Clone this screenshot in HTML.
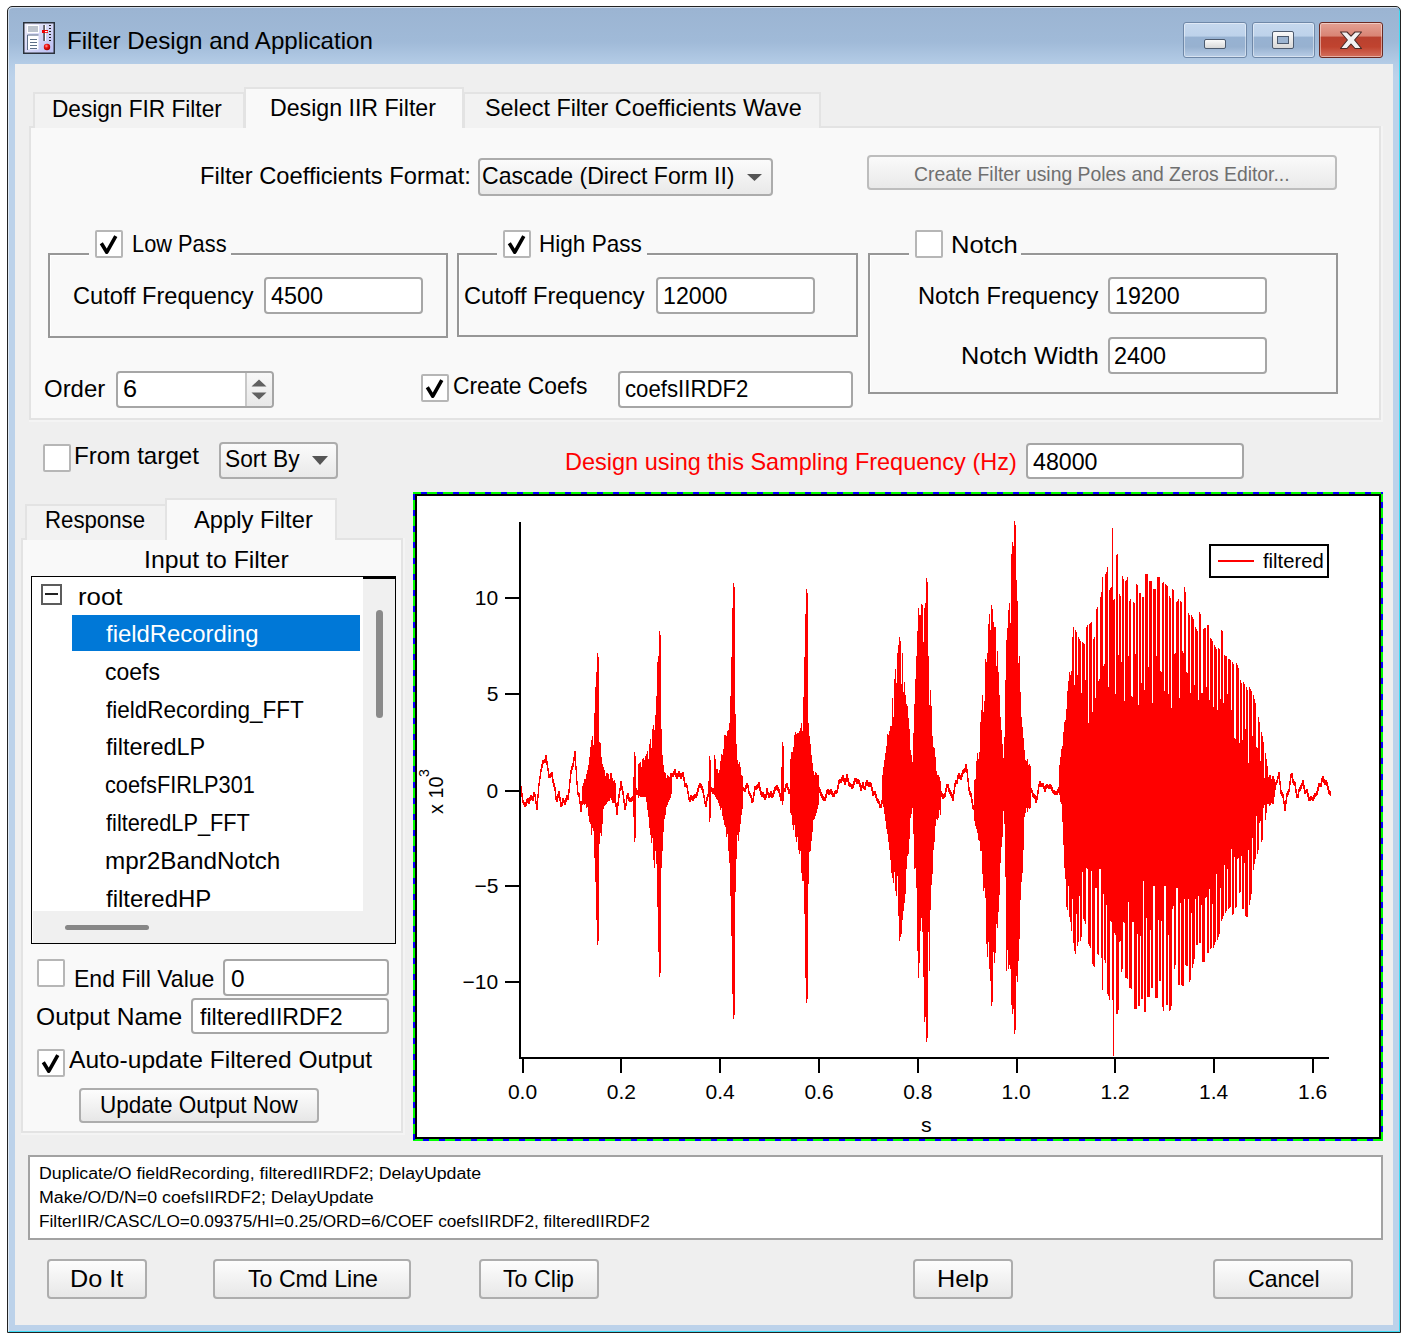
<!DOCTYPE html><html><head><meta charset="utf-8"><style>
html,body{margin:0;padding:0;background:#fff;width:1402px;height:1334px;overflow:hidden;position:relative;font-family:"Liberation Sans",sans-serif}
.t{position:absolute;white-space:nowrap;line-height:1;transform-origin:0 0}
</style></head><body>
<div style="position:absolute;left:7px;top:6px;width:1394px;height:1327px;box-sizing:border-box;border:1px solid #222;border-radius:5px 5px 0 0;background:linear-gradient(#9bb4d2 0px,#a0bad8 35px,#b5cde7 58px,#bcd2ea 70px,#bcd2ea 100%);box-shadow:inset 1px 1px 0 rgba(255,255,255,.55), inset -1px -1px 0 #3fdcf5"></div>
<div style="position:absolute;left:15px;top:64px;width:1378px;height:1261px;box-sizing:border-box;background:#efefef"></div>
<svg style="position:absolute;left:23px;top:22px" width="32" height="32" viewBox="0 0 32 32">
<defs><linearGradient id="ig" x1="0" y1="0" x2="1" y2="1"><stop offset="0" stop-color="#f0f0fb"/><stop offset="1" stop-color="#b9bdf3"/></linearGradient>
<radialGradient id="rb" cx="0.4" cy="0.35" r="0.6"><stop offset="0" stop-color="#ff9a9a"/><stop offset="0.5" stop-color="#ee1111"/><stop offset="1" stop-color="#b00000"/></radialGradient></defs>
<rect x="0.75" y="0.75" width="30.5" height="30.5" fill="url(#ig)" stroke="#2b323c" stroke-width="1.5"/>
<rect x="4.5" y="3.5" width="11" height="7" fill="#bcc3cd" stroke="#fff" stroke-width="1"/>
<rect x="4.5" y="13.5" width="11" height="14" fill="#fff"/>
<path d="M4.5 13 V28 M4.5 13 H15.5" stroke="#5d6f88" stroke-width="1"/>
<path d="M7 17.5H14M7 20.5H14M7 23.5H14M7 26.5H14" stroke="#5d6f88" stroke-width="1"/>
<rect x="20.5" y="3" width="1.3" height="16" fill="#111"/><rect x="21.8" y="3" width="1.2" height="16" fill="#fff"/>
<rect x="19" y="8" width="6" height="3" fill="#e00"/><rect x="22" y="9" width="2.5" height="1.2" fill="#fff"/>
<path d="M26 3.5h2M26 6.5h2M26 9.5h2M26 12.5h2M26 15.5h2M26 18.5h2" stroke="#222" stroke-width="1"/>
<circle cx="24" cy="25" r="3.2" fill="url(#rb)"/>
</svg>
<span class="t" style="left:66.69px;top:28.98px;font-size:24px;color:#000;transform:scaleX(1.0057);">Filter Design and Application</span>
<div style="position:absolute;left:1183px;top:22px;width:64px;height:36px;box-sizing:border-box;border:1px solid #6f88a8;border-radius:3px;background:linear-gradient(#c6d8ee 0%,#bdd2ea 38%,#97b2d2 42%,#97b1d0 70%,#b8cde6 100%);box-shadow:inset 0 0 0 1px rgba(255,255,255,.45)"></div>
<div style="position:absolute;left:1204px;top:39px;width:22px;height:10px;box-sizing:border-box;border:1px solid #4c5a6e;border-radius:2px;background:linear-gradient(#fafafa,#d8d8d8)"></div>
<div style="position:absolute;left:1252px;top:22px;width:63px;height:36px;box-sizing:border-box;border:1px solid #6f88a8;border-radius:3px;background:linear-gradient(#c6d8ee 0%,#bdd2ea 38%,#97b2d2 42%,#97b1d0 70%,#b8cde6 100%);box-shadow:inset 0 0 0 1px rgba(255,255,255,.45)"></div>
<div style="position:absolute;left:1272px;top:31px;width:22px;height:18px;box-sizing:border-box;border:1px solid #4c5a6e;border-radius:2px;background:linear-gradient(#fafafa,#d8d8d8)"></div><div style="position:absolute;left:1277px;top:36px;width:12px;height:8px;box-sizing:border-box;border:1px solid #4c5a6e;background:#9cb4d1"></div>
<div style="position:absolute;left:1319px;top:22px;width:64px;height:36px;box-sizing:border-box;border:1px solid #6b2a22;border-radius:3px;background:linear-gradient(#e3a194 0%,#d98474 38%,#b9412f 42%,#c0432f 70%,#d36f5c 100%);box-shadow:inset 0 0 0 1px rgba(255,255,255,.45)"></div>
<svg style="position:absolute;left:1338px;top:29px" width="26" height="22" viewBox="0 0 26 22"><path d="M2.5 3 L9 3 L13 7.2 L17 3 L23.5 3 L16.6 11 L23.5 19.5 L17 19.5 L13 15 L9 19.5 L2.5 19.5 L9.4 11 Z" fill="#f2f2f2" stroke="#4a2b28" stroke-width="1.1" stroke-linejoin="round"/></svg>
<div style="position:absolute;left:29px;top:126px;width:1352px;height:294px;box-sizing:border-box;background:#f9f9f9;border:2px solid #e3e3e3;box-shadow:1px 1px 0 1px #f4f4f4"></div>
<div style="position:absolute;left:33px;top:92px;width:212px;height:36px;box-sizing:border-box;background:#f2f2f2;border:2px solid #e3e3e3;border-bottom:none"></div>
<div style="position:absolute;left:463px;top:92px;width:358px;height:36px;box-sizing:border-box;background:#f2f2f2;border:2px solid #e3e3e3;border-bottom:none"></div>
<div style="position:absolute;left:244px;top:87px;width:220px;height:41px;box-sizing:border-box;background:#f9f9f9;border:2px solid #e3e3e3;border-bottom:none"></div>
<span class="t" style="left:52.41px;top:96.58px;font-size:24px;color:#000;transform:scaleX(0.9429);">Design FIR Filter</span>
<span class="t" style="left:270.17px;top:96.18px;font-size:24px;color:#000;transform:scaleX(0.9644);">Design IIR Filter</span>
<span class="t" style="left:484.93px;top:96.18px;font-size:24px;color:#000;transform:scaleX(0.9732);">Select Filter Coefficients Wave</span>
<span class="t" style="left:200.42px;top:164.28px;font-size:24px;color:#000;transform:scaleX(0.9876);">Filter Coefficients Format:</span>
<div style="position:absolute;left:478px;top:158px;width:295px;height:38px;box-sizing:border-box;border:2px solid #acacac;border-radius:4px;background:linear-gradient(#fbfbfb,#e9e9e9)"></div>
<svg style="position:absolute;left:747px;top:174px" width="15" height="7"><path d="M0 0 H15 L7.5 7 Z" fill="#555"/></svg>
<span class="t" style="left:482.20px;top:164.08px;font-size:24px;color:#000;transform:scaleX(0.9612);">Cascade (Direct Form II)</span>
<div style="position:absolute;left:867px;top:155px;width:470px;height:35px;box-sizing:border-box;border:2px solid #bdbdbd;border-radius:4px;background:linear-gradient(#fafafa,#e9e9e9)"></div>
<span class="t" style="left:914.08px;top:163.22px;font-size:21px;color:#6f6f6f;transform:scaleX(0.9221);">Create Filter using Poles and Zeros Editor...</span>
<div style="position:absolute;left:48px;top:253px;width:400px;height:85px;box-sizing:border-box;border:2px solid #979797;box-shadow:inset 1px 1px 0 #fff"></div>
<div style="position:absolute;left:89px;top:252px;width:142px;height:4px;box-sizing:border-box;background:#f9f9f9"></div>
<div style="position:absolute;left:95px;top:230px;width:28px;height:28px;box-sizing:border-box;border:2px solid #b6b6b6;border-radius:2px;background:#fff"></div>
<svg style="position:absolute;left:95px;top:230px" width="28" height="28"><path d="M6.3 13.2 L11.8 22.2 L20.8 6.2" fill="none" stroke="#000" stroke-width="3.6" stroke-linejoin="round"/></svg>
<span class="t" style="left:131.58px;top:231.88px;font-size:24px;color:#000;transform:scaleX(0.9086);">Low Pass</span>
<span class="t" style="left:72.67px;top:283.98px;font-size:24px;color:#000;transform:scaleX(0.9830);">Cutoff Frequency</span>
<div style="position:absolute;left:264px;top:277px;width:159px;height:37px;box-sizing:border-box;border:2px solid #a6a6a6;border-radius:4px;background:#fff"></div>
<span class="t" style="left:270.51px;top:284.28px;font-size:24px;color:#000;transform:scaleX(0.9769);">4500</span>
<div style="position:absolute;left:457px;top:253px;width:401px;height:84px;box-sizing:border-box;border:2px solid #979797;box-shadow:inset 1px 1px 0 #fff"></div>
<div style="position:absolute;left:497px;top:252px;width:150px;height:4px;box-sizing:border-box;background:#f9f9f9"></div>
<div style="position:absolute;left:503px;top:230px;width:28px;height:28px;box-sizing:border-box;border:2px solid #b6b6b6;border-radius:2px;background:#fff"></div>
<svg style="position:absolute;left:503px;top:230px" width="28" height="28"><path d="M6.3 13.2 L11.8 22.2 L20.8 6.2" fill="none" stroke="#000" stroke-width="3.6" stroke-linejoin="round"/></svg>
<span class="t" style="left:539.32px;top:231.88px;font-size:24px;color:#000;transform:scaleX(0.9396);">High Pass</span>
<span class="t" style="left:464.27px;top:283.98px;font-size:24px;color:#000;transform:scaleX(0.9830);">Cutoff Frequency</span>
<div style="position:absolute;left:656px;top:277px;width:159px;height:37px;box-sizing:border-box;border:2px solid #a6a6a6;border-radius:4px;background:#fff"></div>
<span class="t" style="left:663.11px;top:284.28px;font-size:24px;color:#000;transform:scaleX(0.9650);">12000</span>
<div style="position:absolute;left:868px;top:253px;width:470px;height:141px;box-sizing:border-box;border:2px solid #979797;box-shadow:inset 1px 1px 0 #fff"></div>
<div style="position:absolute;left:909px;top:252px;width:112px;height:4px;box-sizing:border-box;background:#f9f9f9"></div>
<div style="position:absolute;left:915px;top:230px;width:28px;height:28px;box-sizing:border-box;border:2px solid #b6b6b6;border-radius:2px;background:#fff"></div>
<span class="t" style="left:950.97px;top:232.68px;font-size:24px;color:#000;transform:scaleX(1.0661);">Notch</span>
<span class="t" style="left:917.73px;top:283.98px;font-size:24px;color:#000;transform:scaleX(0.9864);">Notch Frequency</span>
<div style="position:absolute;left:1108px;top:277px;width:159px;height:37px;box-sizing:border-box;border:2px solid #a6a6a6;border-radius:4px;background:#fff"></div>
<span class="t" style="left:1114.81px;top:283.98px;font-size:24px;color:#000;transform:scaleX(0.9681);">19200</span>
<span class="t" style="left:961.29px;top:344.08px;font-size:24px;color:#000;transform:scaleX(1.0535);">Notch Width</span>
<div style="position:absolute;left:1108px;top:337px;width:159px;height:37px;box-sizing:border-box;border:2px solid #a6a6a6;border-radius:4px;background:#fff"></div>
<span class="t" style="left:1114.48px;top:344.08px;font-size:24px;color:#000;transform:scaleX(0.9756);">2400</span>
<span class="t" style="left:44.30px;top:377.48px;font-size:24px;color:#000;transform:scaleX(0.9983);">Order</span>
<div style="position:absolute;left:116px;top:371px;width:158px;height:37px;box-sizing:border-box;border:2px solid #a6a6a6;border-radius:4px;background:#fff"></div>
<div style="position:absolute;left:245px;top:373px;width:27px;height:33px;box-sizing:border-box;border-left:2px solid #c8c8c8;background:linear-gradient(#f7f7f7,#e8e8e8);border-radius:0 3px 3px 0"></div>
<svg style="position:absolute;left:250px;top:378px" width="18" height="24"><path d="M1.5 8.5 H16.5 L9 1.5 Z M1.5 14.5 H16.5 L9 21.5 Z" fill="#606060"/></svg>
<span class="t" style="left:122.88px;top:377.48px;font-size:24px;color:#000;transform:scaleX(1.0545);">6</span>
<div style="position:absolute;left:421px;top:374px;width:28px;height:28px;box-sizing:border-box;border:2px solid #b6b6b6;border-radius:2px;background:#fff"></div>
<svg style="position:absolute;left:421px;top:374px" width="28" height="28"><path d="M6.3 13.2 L11.8 22.2 L20.8 6.2" fill="none" stroke="#000" stroke-width="3.6" stroke-linejoin="round"/></svg>
<span class="t" style="left:452.61px;top:373.58px;font-size:24px;color:#000;transform:scaleX(0.9498);">Create Coefs</span>
<div style="position:absolute;left:618px;top:371px;width:235px;height:37px;box-sizing:border-box;border:2px solid #a6a6a6;border-radius:4px;background:#fff"></div>
<span class="t" style="left:625.27px;top:377.48px;font-size:24px;color:#000;transform:scaleX(0.9257);">coefsIIRDF2</span>
<div style="position:absolute;left:43px;top:444px;width:28px;height:28px;box-sizing:border-box;border:2px solid #b6b6b6;border-radius:2px;background:#fff"></div>
<span class="t" style="left:73.68px;top:443.78px;font-size:24px;color:#000;transform:scaleX(1.0078);">From target</span>
<div style="position:absolute;left:219px;top:442px;width:119px;height:37px;box-sizing:border-box;border:2px solid #acacac;border-radius:4px;background:linear-gradient(#fbfbfb,#e9e9e9)"></div>
<svg style="position:absolute;left:312px;top:456px" width="16" height="9"><path d="M0 0 H16 L8.0 9 Z" fill="#555"/></svg>
<span class="t" style="left:224.95px;top:447.48px;font-size:24px;color:#000;transform:scaleX(0.9466);">Sort By</span>
<span class="t" style="left:564.54px;top:450.18px;font-size:24px;color:#ff0000;transform:scaleX(0.9788);">Design using this Sampling Frequency (Hz)</span>
<div style="position:absolute;left:1026px;top:443px;width:218px;height:36px;box-sizing:border-box;border:2px solid #a6a6a6;border-radius:4px;background:#fff"></div>
<span class="t" style="left:1033.02px;top:449.98px;font-size:24px;color:#000;transform:scaleX(0.9664);">48000</span>
<div style="position:absolute;left:21px;top:538px;width:382px;height:595px;box-sizing:border-box;background:#f9f9f9;border:2px solid #e3e3e3;box-shadow:1px 1px 0 1px #f4f4f4"></div>
<div style="position:absolute;left:25px;top:504px;width:142px;height:36px;box-sizing:border-box;background:#f2f2f2;border:2px solid #e3e3e3;border-bottom:none"></div>
<div style="position:absolute;left:165px;top:498px;width:172px;height:42px;box-sizing:border-box;background:#f9f9f9;border:2px solid #e3e3e3;border-bottom:none"></div>
<span class="t" style="left:45.05px;top:508.18px;font-size:24px;color:#000;transform:scaleX(0.9257);">Response</span>
<span class="t" style="left:193.50px;top:507.98px;font-size:24px;color:#000;transform:scaleX(0.9896);">Apply Filter</span>
<span class="t" style="left:143.57px;top:547.78px;font-size:24px;color:#000;transform:scaleX(1.0335);">Input to Filter</span>
<div style="position:absolute;left:31px;top:576px;width:365px;height:368px;box-sizing:border-box;background:#fff;border:1.5px solid #000"></div>
<div style="position:absolute;left:32.5px;top:911px;width:362.0px;height:31.5px;box-sizing:border-box;background:#f0f0f0"></div>
<div style="position:absolute;left:363px;top:577.5px;width:31.5px;height:333.5px;box-sizing:border-box;background:#f0f0f0"></div>
<div style="position:absolute;left:363px;top:576px;width:33px;height:2.6000000000000227px;box-sizing:border-box;background:#000"></div>
<div style="position:absolute;left:376px;top:610px;width:7px;height:108px;box-sizing:border-box;background:#8a8a8a;border-radius:3.5px"></div>
<div style="position:absolute;left:65px;top:925px;width:84px;height:5px;box-sizing:border-box;background:#878787;border-radius:2.5px"></div>
<div style="position:absolute;left:40.5px;top:583.5px;width:21.5px;height:21.5px;box-sizing:border-box;border:2px solid #5c5c5c"></div>
<div style="position:absolute;left:45px;top:593.4px;width:12.5px;height:1.8000000000000682px;box-sizing:border-box;background:#222"></div>
<span class="t" style="left:78.39px;top:584.58px;font-size:24px;color:#000;transform:scaleX(1.0742);">root</span>
<div style="position:absolute;left:72px;top:615px;width:288px;height:36px;box-sizing:border-box;background:#0078d7"></div>
<span class="t" style="left:106.05px;top:622.08px;font-size:24px;color:#fff;transform:scaleX(0.9947);">fieldRecording</span>
<span class="t" style="left:105.34px;top:659.88px;font-size:24px;color:#000;transform:scaleX(0.9568);">coefs</span>
<span class="t" style="left:106.07px;top:697.68px;font-size:24px;color:#000;transform:scaleX(0.9381);">fieldRecording_FFT</span>
<span class="t" style="left:106.06px;top:735.48px;font-size:24px;color:#000;transform:scaleX(0.9790);">filteredLP</span>
<span class="t" style="left:105.39px;top:773.28px;font-size:24px;color:#000;transform:scaleX(0.9060);">coefsFIRLP301</span>
<span class="t" style="left:106.07px;top:811.08px;font-size:24px;color:#000;transform:scaleX(0.9063);">filteredLP_FFT</span>
<span class="t" style="left:104.78px;top:848.88px;font-size:24px;color:#000;transform:scaleX(1.0109);">mpr2BandNotch</span>
<span class="t" style="left:106.05px;top:886.68px;font-size:24px;color:#000;transform:scaleX(0.9995);">filteredHP</span>
<div style="position:absolute;left:37px;top:959px;width:28px;height:28px;box-sizing:border-box;border:2px solid #b6b6b6;border-radius:2px;background:#fff"></div>
<span class="t" style="left:74.28px;top:966.68px;font-size:24px;color:#000;transform:scaleX(0.9599);">End Fill Value</span>
<div style="position:absolute;left:223px;top:959px;width:166px;height:37px;box-sizing:border-box;border:2px solid #a6a6a6;border-radius:4px;background:#fff"></div>
<span class="t" style="left:230.58px;top:966.68px;font-size:24px;color:#000;transform:scaleX(1.0174);">0</span>
<span class="t" style="left:36.48px;top:1004.78px;font-size:24px;color:#000;transform:scaleX(1.0245);">Output Name</span>
<div style="position:absolute;left:191px;top:998px;width:198px;height:36px;box-sizing:border-box;border:2px solid #a6a6a6;border-radius:4px;background:#fff"></div>
<span class="t" style="left:199.66px;top:1004.78px;font-size:24px;color:#000;transform:scaleX(0.9642);">filteredIIRDF2</span>
<div style="position:absolute;left:37px;top:1049px;width:28px;height:28px;box-sizing:border-box;border:2px solid #b6b6b6;border-radius:2px;background:#fff"></div>
<svg style="position:absolute;left:37px;top:1049px" width="28" height="28"><path d="M6.3 13.2 L11.8 22.2 L20.8 6.2" fill="none" stroke="#000" stroke-width="3.6" stroke-linejoin="round"/></svg>
<span class="t" style="left:69.30px;top:1048.48px;font-size:24px;color:#000;transform:scaleX(1.0236);">Auto-update Filtered Output</span>
<div style="position:absolute;left:79px;top:1088px;width:240px;height:35px;box-sizing:border-box;border:2px solid #adadad;border-radius:4px;background:linear-gradient(#fdfdfd,#e7e7e7)"></div>
<span class="t" style="left:100.06px;top:1092.88px;font-size:24px;color:#000;transform:scaleX(0.9381);">Update Output Now</span>
<div style="position:absolute;left:413px;top:492px;width:970px;height:649px;box-sizing:border-box;background:#00ff00"></div>
<svg style="position:absolute;left:413px;top:492px" width="970" height="649"><path d="M0 1H970" stroke="#0000ff" stroke-width="2" stroke-dasharray="6 10" stroke-dashoffset="-8"/><path d="M1 0V649" stroke="#0000ff" stroke-width="2" stroke-dasharray="6 10" stroke-dashoffset="-2"/><path d="M969 0V649" stroke="#0000ff" stroke-width="2" stroke-dasharray="6 10" stroke-dashoffset="-10"/><path d="M0 648H970" stroke="#0000ff" stroke-width="2" stroke-dasharray="6 10" stroke-dashoffset="-10"/></svg>
<div style="position:absolute;left:415px;top:494px;width:966px;height:645px;box-sizing:border-box;background:#fff;border:2px solid #000"></div>
<svg style="position:absolute;left:0;top:0" width="1402" height="1334" shape-rendering="crispEdges"><path d="M521 786h1V797h-1ZM522 793h1V803h-1ZM523 800h1V805h-1ZM524 802h1V807h-1ZM525 802h1V807h-1ZM526 799h1V806h-1ZM527 798h1V803h-1ZM528 798h1V804h-1ZM529 797h1V804h-1ZM530 795h1V801h-1ZM531 795h1V800h-1ZM532 796h1V801h-1ZM533 792h1V801h-1ZM534 792h1V797h-1ZM535 794h1V804h-1ZM536 801h1V810h-1ZM537 794h1V810h-1ZM538 783h1V798h-1ZM539 776h1V786h-1ZM540 769h1V779h-1ZM541 764h1V772h-1ZM542 760h1V768h-1ZM543 760h1V764h-1ZM544 759h1V763h-1ZM545 755h1V763h-1ZM546 755h1V765h-1ZM547 761h1V771h-1ZM548 768h1V778h-1ZM549 774h1V778h-1ZM550 773h1V778h-1ZM551 772h1V777h-1ZM552 772h1V783h-1ZM553 779h1V787h-1ZM554 783h1V791h-1ZM555 787h1V800h-1ZM556 796h1V802h-1ZM557 794h1V802h-1ZM558 791h1V798h-1ZM559 791h1V801h-1ZM560 797h1V807h-1ZM561 802h1V807h-1ZM562 798h1V806h-1ZM563 798h1V803h-1ZM564 800h1V805h-1ZM565 798h1V805h-1ZM566 795h1V802h-1ZM567 795h1V800h-1ZM568 789h1V800h-1ZM569 779h1V793h-1ZM570 770h1V783h-1ZM571 766h1V774h-1ZM572 763h1V770h-1ZM573 757h1V767h-1ZM574 751h1V761h-1ZM575 751h1V770h-1ZM576 766h1V785h-1ZM577 781h1V795h-1ZM578 792h1V797h-1ZM579 793h1V804h-1ZM580 801h1V812h-1ZM581 801h1V812h-1ZM582 786h1V805h-1ZM583 783h1V804h-1ZM584 779h1V805h-1ZM585 779h1V804h-1ZM586 774h1V808h-1ZM587 770h1V807h-1ZM588 765h1V816h-1ZM589 757h1V822h-1ZM590 747h1V824h-1ZM591 740h1V835h-1ZM592 736h1V828h-1ZM593 745h1V831h-1ZM594 713h1V858h-1ZM595 687h1V882h-1ZM596 672h1V920h-1ZM597 653h1V945h-1ZM598 657h1V941h-1ZM599 742h1V844h-1ZM600 743h1V833h-1ZM601 757h1V836h-1ZM602 764h1V824h-1ZM603 767h1V809h-1ZM604 770h1V806h-1ZM605 776h1V805h-1ZM606 773h1V804h-1ZM607 773h1V802h-1ZM608 774h1V801h-1ZM609 779h1V801h-1ZM610 773h1V798h-1ZM611 773h1V800h-1ZM612 778h1V803h-1ZM613 781h1V803h-1ZM614 780h1V803h-1ZM615 783h1V807h-1ZM616 803h1V815h-1ZM617 802h1V815h-1ZM618 794h1V806h-1ZM619 788h1V798h-1ZM620 781h1V791h-1ZM621 781h1V790h-1ZM622 786h1V795h-1ZM623 791h1V803h-1ZM624 799h1V810h-1ZM625 803h1V810h-1ZM626 795h1V806h-1ZM627 793h1V799h-1ZM628 793h1V801h-1ZM629 797h1V802h-1ZM630 798h1V802h-1ZM631 797h1V802h-1ZM632 796h1V801h-1ZM633 777h1V817h-1ZM634 752h1V842h-1ZM635 756h1V838h-1ZM636 788h1V795h-1ZM637 790h1V795h-1ZM638 764h1V798h-1ZM639 763h1V796h-1ZM640 762h1V797h-1ZM641 767h1V797h-1ZM642 759h1V797h-1ZM643 758h1V797h-1ZM644 760h1V797h-1ZM645 756h1V797h-1ZM646 754h1V802h-1ZM647 751h1V810h-1ZM648 759h1V817h-1ZM649 744h1V828h-1ZM650 739h1V835h-1ZM651 748h1V843h-1ZM652 729h1V838h-1ZM653 725h1V860h-1ZM654 730h1V868h-1ZM655 715h1V851h-1ZM656 696h1V864h-1ZM657 662h1V907h-1ZM658 656h1V952h-1ZM659 631h1V977h-1ZM660 635h1V973h-1ZM661 729h1V868h-1ZM662 755h1V851h-1ZM663 765h1V832h-1ZM664 772h1V819h-1ZM665 773h1V815h-1ZM666 778h1V807h-1ZM667 775h1V805h-1ZM668 776h1V802h-1ZM669 777h1V800h-1ZM670 773h1V798h-1ZM671 773h1V794h-1ZM672 773h1V777h-1ZM673 771h1V777h-1ZM674 769h1V775h-1ZM675 769h1V777h-1ZM676 773h1V779h-1ZM677 773h1V779h-1ZM678 771h1V777h-1ZM679 771h1V777h-1ZM680 773h1V779h-1ZM681 773h1V779h-1ZM682 772h1V777h-1ZM683 772h1V781h-1ZM684 777h1V787h-1ZM685 783h1V787h-1ZM686 783h1V788h-1ZM687 785h1V794h-1ZM688 791h1V800h-1ZM689 797h1V802h-1ZM690 795h1V802h-1ZM691 795h1V800h-1ZM692 796h1V801h-1ZM693 795h1V801h-1ZM694 794h1V799h-1ZM695 794h1V798h-1ZM696 792h1V798h-1ZM697 788h1V796h-1ZM698 785h1V792h-1ZM699 783h1V788h-1ZM700 783h1V788h-1ZM701 784h1V790h-1ZM702 786h1V793h-1ZM703 789h1V798h-1ZM704 795h1V804h-1ZM705 801h1V807h-1ZM706 797h1V807h-1ZM707 794h1V801h-1ZM708 781h1V797h-1ZM709 756h1V822h-1ZM710 760h1V818h-1ZM711 787h1V792h-1ZM712 788h1V794h-1ZM713 788h1V794h-1ZM714 755h1V795h-1ZM715 759h1V797h-1ZM716 769h1V799h-1ZM717 769h1V800h-1ZM718 773h1V803h-1ZM719 770h1V806h-1ZM720 761h1V810h-1ZM721 754h1V808h-1ZM722 755h1V816h-1ZM723 749h1V820h-1ZM724 735h1V825h-1ZM725 735h1V827h-1ZM726 736h1V837h-1ZM727 731h1V834h-1ZM728 730h1V851h-1ZM729 723h1V863h-1ZM730 696h1V896h-1ZM731 657h1V936h-1ZM732 608h1V994h-1ZM733 583h1V1019h-1ZM734 587h1V1015h-1ZM735 714h1V892h-1ZM736 744h1V859h-1ZM737 760h1V835h-1ZM738 764h1V841h-1ZM739 762h1V832h-1ZM740 767h1V824h-1ZM741 775h1V815h-1ZM742 776h1V809h-1ZM743 787h1V791h-1ZM744 788h1V792h-1ZM745 785h1V792h-1ZM746 783h1V789h-1ZM747 783h1V788h-1ZM748 785h1V794h-1ZM749 791h1V796h-1ZM750 793h1V798h-1ZM751 795h1V803h-1ZM752 798h1V803h-1ZM753 792h1V802h-1ZM754 786h1V796h-1ZM755 786h1V790h-1ZM756 785h1V790h-1ZM757 784h1V789h-1ZM758 782h1V788h-1ZM759 782h1V791h-1ZM760 787h1V795h-1ZM761 791h1V797h-1ZM762 792h1V797h-1ZM763 792h1V798h-1ZM764 794h1V800h-1ZM765 794h1V800h-1ZM766 788h1V798h-1ZM767 788h1V795h-1ZM768 792h1V798h-1ZM769 793h1V798h-1ZM770 791h1V797h-1ZM771 791h1V798h-1ZM772 793h1V798h-1ZM773 790h1V797h-1ZM774 787h1V794h-1ZM775 786h1V791h-1ZM776 785h1V790h-1ZM777 785h1V791h-1ZM778 787h1V793h-1ZM779 789h1V797h-1ZM780 793h1V801h-1ZM781 767h1V801h-1ZM782 742h1V805h-1ZM783 746h1V801h-1ZM784 788h1V792h-1ZM785 784h1V792h-1ZM786 783h1V788h-1ZM787 783h1V790h-1ZM788 787h1V794h-1ZM789 789h1V794h-1ZM790 759h1V813h-1ZM791 752h1V815h-1ZM792 752h1V825h-1ZM793 747h1V830h-1ZM794 735h1V825h-1ZM795 732h1V837h-1ZM796 734h1V842h-1ZM797 733h1V837h-1ZM798 733h1V850h-1ZM799 731h1V854h-1ZM800 728h1V851h-1ZM801 723h1V873h-1ZM802 731h1V881h-1ZM803 697h1V881h-1ZM804 657h1V914h-1ZM805 614h1V978h-1ZM806 589h1V1003h-1ZM807 593h1V999h-1ZM808 723h1V884h-1ZM809 736h1V852h-1ZM810 744h1V851h-1ZM811 755h1V841h-1ZM812 763h1V832h-1ZM813 771h1V820h-1ZM814 775h1V819h-1ZM815 772h1V816h-1ZM816 773h1V813h-1ZM817 775h1V809h-1ZM818 775h1V805h-1ZM819 787h1V793h-1ZM820 789h1V796h-1ZM821 792h1V798h-1ZM822 794h1V800h-1ZM823 796h1V801h-1ZM824 797h1V801h-1ZM825 794h1V801h-1ZM826 790h1V798h-1ZM827 789h1V794h-1ZM828 789h1V795h-1ZM829 790h1V795h-1ZM830 789h1V794h-1ZM831 789h1V795h-1ZM832 791h1V797h-1ZM833 793h1V797h-1ZM834 791h1V797h-1ZM835 790h1V794h-1ZM836 790h1V794h-1ZM837 785h1V793h-1ZM838 780h1V789h-1ZM839 779h1V784h-1ZM840 779h1V783h-1ZM841 777h1V783h-1ZM842 775h1V781h-1ZM843 775h1V782h-1ZM844 778h1V785h-1ZM845 778h1V785h-1ZM846 774h1V782h-1ZM847 774h1V782h-1ZM848 778h1V786h-1ZM849 782h1V787h-1ZM850 783h1V787h-1ZM851 784h1V789h-1ZM852 784h1V789h-1ZM853 781h1V788h-1ZM854 778h1V785h-1ZM855 778h1V782h-1ZM856 778h1V784h-1ZM857 779h1V784h-1ZM858 779h1V784h-1ZM859 780h1V787h-1ZM860 783h1V791h-1ZM861 785h1V791h-1ZM862 782h1V788h-1ZM863 782h1V789h-1ZM864 786h1V790h-1ZM865 782h1V790h-1ZM866 780h1V786h-1ZM867 780h1V786h-1ZM868 782h1V787h-1ZM869 782h1V787h-1ZM870 782h1V787h-1ZM871 783h1V791h-1ZM872 787h1V796h-1ZM873 791h1V796h-1ZM874 791h1V795h-1ZM875 791h1V798h-1ZM876 794h1V801h-1ZM877 798h1V803h-1ZM878 799h1V804h-1ZM879 801h1V808h-1ZM880 804h1V808h-1ZM881 800h1V808h-1ZM882 775h1V804h-1ZM883 767h1V807h-1ZM884 760h1V814h-1ZM885 753h1V821h-1ZM886 746h1V829h-1ZM887 734h1V834h-1ZM888 735h1V842h-1ZM889 731h1V850h-1ZM890 726h1V860h-1ZM891 726h1V873h-1ZM892 698h1V878h-1ZM893 717h1V883h-1ZM894 679h1V872h-1ZM895 669h1V891h-1ZM896 683h1V896h-1ZM897 653h1V876h-1ZM898 645h1V916h-1ZM899 637h1V941h-1ZM900 641h1V937h-1ZM901 684h1V934h-1ZM902 653h1V920h-1ZM903 692h1V911h-1ZM904 682h1V903h-1ZM905 695h1V894h-1ZM906 704h1V869h-1ZM907 706h1V856h-1ZM908 718h1V854h-1ZM909 729h1V839h-1ZM910 750h1V818h-1ZM911 755h1V814h-1ZM912 762h1V808h-1ZM913 733h1V834h-1ZM914 704h1V869h-1ZM915 679h1V868h-1ZM916 656h1V888h-1ZM917 631h1V951h-1ZM918 608h1V978h-1ZM919 615h1V963h-1ZM920 615h1V931h-1ZM921 604h1V918h-1ZM922 605h1V932h-1ZM923 642h1V977h-1ZM924 608h1V1022h-1ZM925 603h1V1017h-1ZM926 578h1V1042h-1ZM927 582h1V1038h-1ZM928 656h1V932h-1ZM929 705h1V971h-1ZM930 690h1V910h-1ZM931 706h1V885h-1ZM932 736h1V874h-1ZM933 747h1V850h-1ZM934 748h1V842h-1ZM935 757h1V826h-1ZM936 771h1V819h-1ZM937 775h1V820h-1ZM938 775h1V818h-1ZM939 777h1V810h-1ZM940 781h1V815h-1ZM941 791h1V797h-1ZM942 793h1V799h-1ZM943 794h1V799h-1ZM944 793h1V798h-1ZM945 788h1V797h-1ZM946 784h1V792h-1ZM947 784h1V788h-1ZM948 784h1V792h-1ZM949 788h1V794h-1ZM950 790h1V796h-1ZM951 792h1V798h-1ZM952 794h1V801h-1ZM953 790h1V801h-1ZM954 783h1V794h-1ZM955 780h1V787h-1ZM956 780h1V784h-1ZM957 775h1V784h-1ZM958 773h1V779h-1ZM959 773h1V779h-1ZM960 775h1V780h-1ZM961 773h1V780h-1ZM962 770h1V777h-1ZM963 769h1V774h-1ZM964 768h1V773h-1ZM965 764h1V772h-1ZM966 764h1V773h-1ZM967 769h1V782h-1ZM968 778h1V791h-1ZM969 787h1V795h-1ZM970 791h1V797h-1ZM971 793h1V803h-1ZM972 799h1V809h-1ZM973 805h1V810h-1ZM974 780h1V821h-1ZM975 779h1V826h-1ZM976 761h1V829h-1ZM977 753h1V833h-1ZM978 759h1V840h-1ZM979 752h1V841h-1ZM980 722h1V851h-1ZM981 710h1V851h-1ZM982 695h1V874h-1ZM983 712h1V891h-1ZM984 701h1V888h-1ZM985 659h1V898h-1ZM986 662h1V944h-1ZM987 653h1V957h-1ZM988 624h1V942h-1ZM989 614h1V969h-1ZM990 630h1V981h-1ZM991 605h1V1006h-1ZM992 609h1V1002h-1ZM993 622h1V952h-1ZM994 627h1V963h-1ZM995 627h1V953h-1ZM996 666h1V924h-1ZM997 651h1V928h-1ZM998 672h1V912h-1ZM999 695h1V895h-1ZM1000 717h1V863h-1ZM1001 730h1V847h-1ZM1002 744h1V837h-1ZM1003 758h1V811h-1ZM1004 737h1V824h-1ZM1005 680h1V877h-1ZM1006 640h1V971h-1ZM1007 628h1V950h-1ZM1008 610h1V969h-1ZM1009 603h1V965h-1ZM1010 623h1V969h-1ZM1011 554h1V1005h-1ZM1012 542h1V1014h-1ZM1013 546h1V1009h-1ZM1014 521h1V1034h-1ZM1015 525h1V1030h-1ZM1016 580h1V976h-1ZM1017 601h1V982h-1ZM1018 663h1V961h-1ZM1019 656h1V939h-1ZM1020 692h1V900h-1ZM1021 717h1V882h-1ZM1022 727h1V873h-1ZM1023 738h1V850h-1ZM1024 750h1V817h-1ZM1025 760h1V813h-1ZM1026 761h1V808h-1ZM1027 759h1V812h-1ZM1028 765h1V808h-1ZM1029 764h1V809h-1ZM1030 766h1V808h-1ZM1031 788h1V793h-1ZM1032 790h1V797h-1ZM1033 793h1V798h-1ZM1034 794h1V799h-1ZM1035 795h1V803h-1ZM1036 796h1V803h-1ZM1037 790h1V800h-1ZM1038 784h1V794h-1ZM1039 781h1V787h-1ZM1040 781h1V787h-1ZM1041 783h1V787h-1ZM1042 783h1V787h-1ZM1043 783h1V789h-1ZM1044 786h1V792h-1ZM1045 785h1V792h-1ZM1046 784h1V789h-1ZM1047 784h1V788h-1ZM1048 785h1V789h-1ZM1049 784h1V789h-1ZM1050 784h1V789h-1ZM1051 785h1V791h-1ZM1052 787h1V793h-1ZM1053 790h1V794h-1ZM1054 790h1V795h-1ZM1055 791h1V795h-1ZM1056 791h1V795h-1ZM1057 789h1V795h-1ZM1058 787h1V793h-1ZM1059 765h1V795h-1ZM1060 757h1V802h-1ZM1061 749h1V804h-1ZM1062 746h1V822h-1ZM1063 732h1V845h-1ZM1064 722h1V868h-1ZM1065 720h1V879h-1ZM1066 709h1V907h-1ZM1067 691h1V910h-1ZM1068 681h1V886h-1ZM1069 672h1V917h-1ZM1070 675h1V922h-1ZM1071 671h1V931h-1ZM1072 637h1V899h-1ZM1073 627h1V943h-1ZM1074 685h1V951h-1ZM1075 630h1V954h-1ZM1076 632h1V914h-1ZM1077 675h1V946h-1ZM1078 637h1V942h-1ZM1079 639h1V896h-1ZM1080 641h1V941h-1ZM1081 693h1V937h-1ZM1082 642h1V872h-1ZM1083 643h1V919h-1ZM1084 644h1V921h-1ZM1085 680h1V924h-1ZM1086 627h1V868h-1ZM1087 625h1V869h-1ZM1088 723h1V944h-1ZM1089 624h1V946h-1ZM1090 623h1V948h-1ZM1091 622h1V871h-1ZM1092 712h1V964h-1ZM1093 639h1V966h-1ZM1094 637h1V967h-1ZM1095 698h1V888h-1ZM1096 609h1V888h-1ZM1097 607h1V954h-1ZM1098 681h1V955h-1ZM1099 679h1V869h-1ZM1100 597h1V869h-1ZM1101 592h1V958h-1ZM1102 577h1V990h-1ZM1103 666h1V894h-1ZM1104 664h1V960h-1ZM1105 574h1V963h-1ZM1106 572h1V905h-1ZM1107 567h1V994h-1ZM1108 687h1V996h-1ZM1109 590h1V1000h-1ZM1110 588h1V921h-1ZM1111 587h1V922h-1ZM1112 528h1V1000h-1ZM1113 600h1V1056h-1ZM1114 599h1V933h-1ZM1115 694h1V935h-1ZM1116 555h1V1014h-1ZM1117 554h1V1014h-1ZM1118 655h1V1010h-1ZM1119 594h1V942h-1ZM1120 596h1V941h-1ZM1121 662h1V972h-1ZM1122 576h1V969h-1ZM1123 579h1V922h-1ZM1124 701h1V923h-1ZM1125 581h1V978h-1ZM1126 580h1V978h-1ZM1127 577h1V979h-1ZM1128 656h1V902h-1ZM1129 601h1V988h-1ZM1130 599h1V988h-1ZM1131 696h1V989h-1ZM1132 697h1V922h-1ZM1133 602h1V922h-1ZM1134 603h1V1009h-1ZM1135 654h1V1009h-1ZM1136 584h1V1009h-1ZM1137 585h1V934h-1ZM1138 705h1V1006h-1ZM1139 593h1V1006h-1ZM1140 593h1V936h-1ZM1141 683h1V999h-1ZM1142 597h1V999h-1ZM1143 597h1V881h-1ZM1144 690h1V1012h-1ZM1145 574h1V1012h-1ZM1146 574h1V918h-1ZM1147 574h1V997h-1ZM1148 667h1V997h-1ZM1149 581h1V997h-1ZM1150 581h1V930h-1ZM1151 581h1V988h-1ZM1152 703h1V988h-1ZM1153 589h1V886h-1ZM1154 589h1V886h-1ZM1155 589h1V998h-1ZM1156 656h1V998h-1ZM1157 577h1V998h-1ZM1158 577h1V920h-1ZM1159 577h1V981h-1ZM1160 671h1V981h-1ZM1161 672h1V921h-1ZM1162 583h1V1007h-1ZM1163 582h1V1011h-1ZM1164 691h1V886h-1ZM1165 584h1V886h-1ZM1166 585h1V1005h-1ZM1167 586h1V1005h-1ZM1168 694h1V935h-1ZM1169 596h1V1011h-1ZM1170 598h1V1010h-1ZM1171 708h1V1006h-1ZM1172 589h1V909h-1ZM1173 590h1V906h-1ZM1174 654h1V969h-1ZM1175 653h1V965h-1ZM1176 602h1V888h-1ZM1177 601h1V888h-1ZM1178 599h1V985h-1ZM1179 698h1V985h-1ZM1180 601h1V903h-1ZM1181 602h1V985h-1ZM1182 651h1V986h-1ZM1183 653h1V986h-1ZM1184 587h1V899h-1ZM1185 592h1V965h-1ZM1186 672h1V966h-1ZM1187 673h1V966h-1ZM1188 613h1V899h-1ZM1189 615h1V982h-1ZM1190 693h1V980h-1ZM1191 615h1V913h-1ZM1192 617h1V968h-1ZM1193 619h1V964h-1ZM1194 685h1V959h-1ZM1195 627h1V899h-1ZM1196 629h1V945h-1ZM1197 631h1V945h-1ZM1198 700h1V896h-1ZM1199 612h1V943h-1ZM1200 614h1V943h-1ZM1201 693h1V905h-1ZM1202 693h1V962h-1ZM1203 629h1V962h-1ZM1204 628h1V962h-1ZM1205 628h1V898h-1ZM1206 687h1V897h-1ZM1207 625h1V953h-1ZM1208 625h1V953h-1ZM1209 700h1V889h-1ZM1210 638h1V949h-1ZM1211 639h1V948h-1ZM1212 641h1V904h-1ZM1213 707h1V948h-1ZM1214 645h1V945h-1ZM1215 647h1V942h-1ZM1216 649h1V874h-1ZM1217 710h1V940h-1ZM1218 648h1V937h-1ZM1219 649h1V934h-1ZM1220 699h1V888h-1ZM1221 630h1V921h-1ZM1222 631h1V919h-1ZM1223 703h1V916h-1ZM1224 655h1V865h-1ZM1225 656h1V913h-1ZM1226 656h1V911h-1ZM1227 694h1V869h-1ZM1228 659h1V909h-1ZM1229 659h1V908h-1ZM1230 660h1V907h-1ZM1231 710h1V849h-1ZM1232 662h1V915h-1ZM1233 664h1V914h-1ZM1234 738h1V857h-1ZM1235 739h1V908h-1ZM1236 663h1V907h-1ZM1237 665h1V859h-1ZM1238 668h1V858h-1ZM1239 743h1V893h-1ZM1240 680h1V892h-1ZM1241 683h1V856h-1ZM1242 740h1V909h-1ZM1243 682h1V909h-1ZM1244 684h1V863h-1ZM1245 729h1V916h-1ZM1246 687h1V917h-1ZM1247 690h1V917h-1ZM1248 763h1V850h-1ZM1249 687h1V905h-1ZM1250 689h1V900h-1ZM1251 691h1V894h-1ZM1252 736h1V838h-1ZM1253 695h1V870h-1ZM1254 699h1V864h-1ZM1255 703h1V859h-1ZM1256 747h1V816h-1ZM1257 748h1V854h-1ZM1258 717h1V850h-1ZM1259 722h1V823h-1ZM1260 761h1V821h-1ZM1261 732h1V842h-1ZM1262 736h1V840h-1ZM1263 742h1V808h-1ZM1264 778h1V805h-1ZM1265 753h1V820h-1ZM1266 759h1V813h-1ZM1267 766h1V804h-1ZM1268 777h1V804h-1ZM1269 775h1V806h-1ZM1270 775h1V805h-1ZM1271 779h1V803h-1ZM1272 776h1V804h-1ZM1273 776h1V804h-1ZM1274 779h1V797h-1ZM1275 782h1V790h-1ZM1276 780h1V785h-1ZM1277 776h1V783h-1ZM1278 772h1V779h-1ZM1279 772h1V785h-1ZM1280 781h1V794h-1ZM1281 790h1V796h-1ZM1282 792h1V798h-1ZM1283 794h1V804h-1ZM1284 801h1V811h-1ZM1285 800h1V811h-1ZM1286 793h1V804h-1ZM1287 791h1V797h-1ZM1288 789h1V795h-1ZM1289 781h1V792h-1ZM1290 774h1V785h-1ZM1291 773h1V778h-1ZM1292 773h1V783h-1ZM1293 779h1V785h-1ZM1294 781h1V786h-1ZM1295 782h1V793h-1ZM1296 789h1V798h-1ZM1297 794h1V798h-1ZM1298 789h1V798h-1ZM1299 787h1V792h-1ZM1300 785h1V791h-1ZM1301 783h1V789h-1ZM1302 780h1V786h-1ZM1303 780h1V789h-1ZM1304 785h1V794h-1ZM1305 790h1V794h-1ZM1306 789h1V793h-1ZM1307 789h1V797h-1ZM1308 793h1V801h-1ZM1309 797h1V801h-1ZM1310 796h1V801h-1ZM1311 796h1V800h-1ZM1312 797h1V801h-1ZM1313 795h1V801h-1ZM1314 793h1V799h-1ZM1315 793h1V797h-1ZM1316 791h1V796h-1ZM1317 787h1V795h-1ZM1318 783h1V791h-1ZM1319 783h1V787h-1ZM1320 783h1V787h-1ZM1321 778h1V787h-1ZM1322 776h1V782h-1ZM1323 776h1V783h-1ZM1324 779h1V785h-1ZM1325 780h1V785h-1ZM1326 780h1V786h-1ZM1327 782h1V790h-1ZM1328 786h1V794h-1ZM1329 790h1V795h-1ZM1330 791h1V796h-1Z" fill="#ff0000"/><path d="M519 522h2V1059H519Z" fill="#000"/><path d="M519 1056.5H1329V1058.5H519Z" fill="#000"/><rect x="505" y="597" width="15" height="2" fill="#000"/><rect x="505" y="692.5" width="15" height="2" fill="#000"/><rect x="505" y="789.7" width="15" height="2" fill="#000"/><rect x="505" y="884.9" width="15" height="2" fill="#000"/><rect x="505" y="981" width="15" height="2" fill="#000"/><rect x="521.5" y="1057" width="2" height="16" fill="#000"/><rect x="620.3" y="1057" width="2" height="16" fill="#000"/><rect x="719.1" y="1057" width="2" height="16" fill="#000"/><rect x="817.9" y="1057" width="2" height="16" fill="#000"/><rect x="916.7" y="1057" width="2" height="16" fill="#000"/><rect x="1015.5" y="1057" width="2" height="16" fill="#000"/><rect x="1114.3" y="1057" width="2" height="16" fill="#000"/><rect x="1213.1" y="1057" width="2" height="16" fill="#000"/><rect x="1311.9" y="1057" width="2" height="16" fill="#000"/></svg>
<span class="t" style="left:474.85px;top:587.32px;font-size:21px;color:#000;transform:scaleX(1.0000);">10</span>
<span class="t" style="left:486.85px;top:682.82px;font-size:21px;color:#000;transform:scaleX(1.0000);">5</span>
<span class="t" style="left:486.60px;top:780.02px;font-size:21px;color:#000;transform:scaleX(1.0000);">0</span>
<span class="t" style="left:474.60px;top:875.22px;font-size:21px;color:#000;transform:scaleX(1.0000);">−5</span>
<span class="t" style="left:462.60px;top:971.32px;font-size:21px;color:#000;transform:scaleX(1.0000);">−10</span>
<span class="t" style="left:507.88px;top:1081.22px;font-size:21px;color:#000;transform:scaleX(1.0000);">0.0</span>
<span class="t" style="left:606.80px;top:1081.22px;font-size:21px;color:#000;transform:scaleX(1.0000);">0.2</span>
<span class="t" style="left:705.48px;top:1081.22px;font-size:21px;color:#000;transform:scaleX(1.0000);">0.4</span>
<span class="t" style="left:804.40px;top:1081.22px;font-size:21px;color:#000;transform:scaleX(1.0000);">0.6</span>
<span class="t" style="left:903.20px;top:1081.22px;font-size:21px;color:#000;transform:scaleX(1.0000);">0.8</span>
<span class="t" style="left:1001.50px;top:1081.22px;font-size:21px;color:#000;transform:scaleX(1.0000);">1.0</span>
<span class="t" style="left:1100.42px;top:1081.22px;font-size:21px;color:#000;transform:scaleX(1.0000);">1.2</span>
<span class="t" style="left:1199.10px;top:1081.22px;font-size:21px;color:#000;transform:scaleX(1.0000);">1.4</span>
<span class="t" style="left:1298.03px;top:1081.22px;font-size:21px;color:#000;transform:scaleX(1.0000);">1.6</span>
<span class="t" style="left:921.29px;top:1114.22px;font-size:21px;color:#000;transform:scaleX(1.0162);">s</span>
<span class="t" style="left:424.92px;top:814.24px;font-size:21px;transform:rotate(-90deg) scaleX(0.9419)">x 10</span>
<span class="t" style="left:416.75px;top:776.50px;font-size:14px;transform:rotate(-90deg) scaleX(1.0000)">3</span>
<div style="position:absolute;left:1209px;top:544px;width:120px;height:34px;box-sizing:border-box;border:2px solid #000;background:#fff"></div>
<div style="position:absolute;left:1218px;top:560px;width:36px;height:2px;box-sizing:border-box;background:#ff0000"></div>
<span class="t" style="left:1262.76px;top:550.32px;font-size:21px;color:#000;transform:scaleX(0.9633);">filtered</span>
<div style="position:absolute;left:28px;top:1155px;width:1355px;height:85px;box-sizing:border-box;background:#fff;border:2px solid #a2a2a2"></div>
<span class="t" style="left:39.22px;top:1165.76px;font-size:16px;color:#000;transform:scaleX(1.1072);">Duplicate/O fieldRecording, filteredIIRDF2; DelayUpdate</span>
<span class="t" style="left:39.21px;top:1190.06px;font-size:16px;color:#000;transform:scaleX(1.1117);">Make/O/D/N=0 coefsIIRDF2; DelayUpdate</span>
<span class="t" style="left:39.25px;top:1213.56px;font-size:16px;color:#000;transform:scaleX(1.0777);">FilterIIR/CASC/LO=0.09375/HI=0.25/ORD=6/COEF coefsIIRDF2, filteredIIRDF2</span>
<div style="position:absolute;left:47px;top:1259px;width:100px;height:40px;box-sizing:border-box;border:2px solid #adadad;border-radius:4px;background:linear-gradient(#fdfdfd,#e7e7e7)"></div>
<span class="t" style="left:69.80px;top:1267.48px;font-size:24px;color:#000;transform:scaleX(1.0495);">Do It</span>
<div style="position:absolute;left:213px;top:1259px;width:198px;height:40px;box-sizing:border-box;border:2px solid #adadad;border-radius:4px;background:linear-gradient(#fdfdfd,#e7e7e7)"></div>
<span class="t" style="left:247.52px;top:1267.48px;font-size:24px;color:#000;transform:scaleX(0.9644);">To Cmd Line</span>
<div style="position:absolute;left:479px;top:1259px;width:120px;height:40px;box-sizing:border-box;border:2px solid #adadad;border-radius:4px;background:linear-gradient(#fdfdfd,#e7e7e7)"></div>
<span class="t" style="left:503.02px;top:1267.48px;font-size:24px;color:#000;transform:scaleX(0.9672);">To Clip</span>
<div style="position:absolute;left:913px;top:1259px;width:100px;height:40px;box-sizing:border-box;border:2px solid #adadad;border-radius:4px;background:linear-gradient(#fdfdfd,#e7e7e7)"></div>
<span class="t" style="left:937.30px;top:1267.48px;font-size:24px;color:#000;transform:scaleX(1.0508);">Help</span>
<div style="position:absolute;left:1213px;top:1259px;width:140px;height:40px;box-sizing:border-box;border:2px solid #adadad;border-radius:4px;background:linear-gradient(#fdfdfd,#e7e7e7)"></div>
<span class="t" style="left:1248.10px;top:1267.48px;font-size:24px;color:#000;transform:scaleX(0.9597);">Cancel</span>
</body></html>
